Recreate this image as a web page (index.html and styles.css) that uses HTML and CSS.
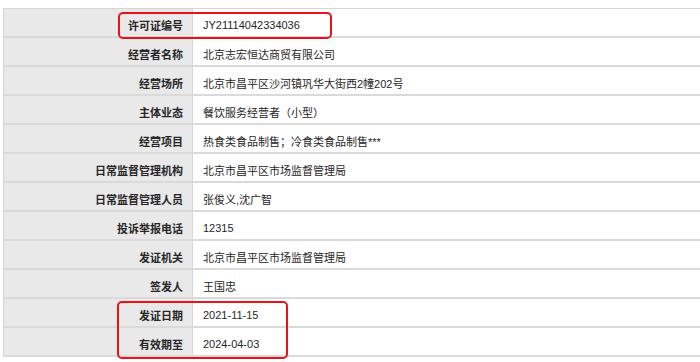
FILE: index.html
```html
<!DOCTYPE html>
<html lang="zh">
<head>
<meta charset="utf-8">
<link rel="stylesheet" href="styles.css">
</head>
<body>
<div class="sheet">
  <div class="table">
    <div class="row"><div class="label">许可证编号</div><div class="value">JY21114042334036</div></div>
    <div class="row"><div class="label">经营者名称</div><div class="value">北京志宏恒达商贸有限公司</div></div>
    <div class="row"><div class="label">经营场所</div><div class="value">北京市昌平区沙河镇巩华大街西2幢202号</div></div>
    <div class="row"><div class="label">主体业态</div><div class="value">餐饮服务经营者（小型）</div></div>
    <div class="row"><div class="label">经营项目</div><div class="value">热食类食品制售；冷食类食品制售***</div></div>
    <div class="row"><div class="label">日常监督管理机构</div><div class="value">北京市昌平区市场监督管理局</div></div>
    <div class="row"><div class="label">日常监督管理人员</div><div class="value">张俊义,沈广智</div></div>
    <div class="row"><div class="label">投诉举报电话</div><div class="value">12315</div></div>
    <div class="row"><div class="label">发证机关</div><div class="value">北京市昌平区市场监督管理局</div></div>
    <div class="row"><div class="label">签发人</div><div class="value">王国忠</div></div>
    <div class="row"><div class="label">发证日期</div><div class="value">2021-11-15</div></div>
    <div class="row"><div class="label">有效期至</div><div class="value">2024-04-03</div></div>
  </div>
  <div class="mark mark-top"></div>
  <div class="mark mark-bottom"></div>
</div>
</body>
</html>
```
FILE: styles.css
```css
html, body {
  margin: 0;
  padding: 0;
  background: #ffffff;
}
body {
  font-family: "Liberation Sans", "Noto Sans CJK SC", sans-serif;
  font-size: 11px;
  color: #262626;
  overflow: hidden;
  width: 700px;
  height: 362px;
}
.sheet {
  position: relative;
  padding: 8px 0 0 3px;
}
.table {
  border-top: 1px solid #d6d6d6;
  border-left: 1px solid #d6d6d6;
}
.row {
  display: grid;
  grid-template-columns: 189px 1fr;
  height: 27px;
  border-bottom: 2px solid #dadada;
}
.label {
  background: #e9e9e9;
  font-weight: bold;
  padding: 5px 9px 0 0;
  border-right: 1px solid #d6d6d6;
  display: flex;
  align-items: center;
  justify-content: flex-end;
}
.value {
  padding: 5px 0 0 10px;
  display: flex;
  align-items: center;
  white-space: nowrap;
}
.mark {
  position: absolute;
  border: 2px solid #ec1119;
  border-radius: 5px;
}
.mark-top {
  left: 118px;
  top: 12px;
  width: 210px;
  height: 23px;
}
.mark-bottom {
  left: 117px;
  top: 301px;
  width: 167px;
  height: 54px;
}
```
